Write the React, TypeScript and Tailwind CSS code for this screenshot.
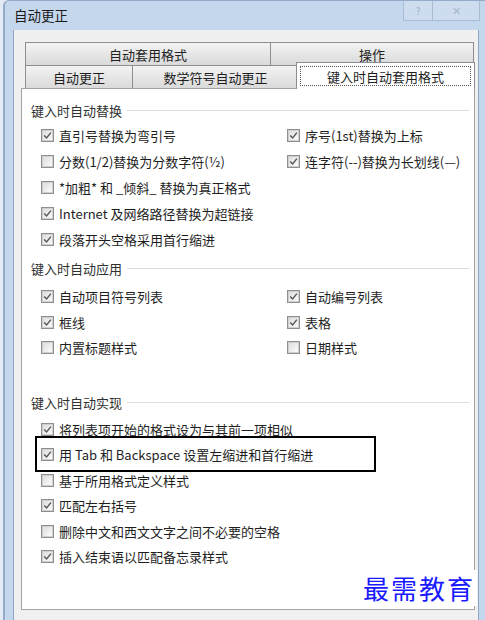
import React from "react";

const Check = ({ checked }: { checked: boolean }) => (
  <span className="w-[13px] h-[13px] border border-[#8e8f8f] bg-[#f4f4f4] flex items-center justify-center shrink-0">
    <span className="w-[11px] h-[11px] border border-[#cfcfcf] bg-linear-to-br from-[#dedede] to-[#fbfbfb] flex items-center justify-center">
      {checked && (
        <svg width="9" height="9" viewBox="0 0 9 9">
          <path d="M1.2 4.4 L3.6 6.9 L7.9 1.6" fill="none" stroke="#5a5a5a" strokeWidth="1.5" />
        </svg>
      )}
    </span>
  </span>
);

const Item = ({ checked, label }: { checked: boolean; label: string }) => (
  <div className="flex items-center gap-[5px] h-full whitespace-nowrap">
    <Check checked={checked} />
    <span>{label}</span>
  </div>
);

const Header = ({ label }: { label: string }) => (
  <div className="flex items-center h-[20px] pl-[9px] pr-[5px] gap-[5px] text-[#303030]">
    <span className="whitespace-nowrap">{label}</span>
    <span className="flex-1 h-px bg-[#d5dfe5]" />
  </div>
);

const TabBtn = ({ label, w }: { label: string; w: string }) => (
  <div
    className={`${w} h-[23px] border border-b-0 border-[#8c8e94] -ml-px first:ml-0 bg-linear-to-b from-[#f3f3f3] to-[#dadada] flex items-center justify-center text-[#222]`}
  >
    {label}
  </div>
);

export default function App() {
  return (
    <div className="w-[485px] h-[620px] bg-[#e3ebf5] pl-[3px] relative overflow-hidden text-[13px] leading-none text-[#1e1e1e] font-['Noto_Sans_CJK_SC','Microsoft_YaHei',sans-serif]">
      <div className="h-full border-l-2 border-t border-[#93abc8] rounded-tl-[6px] bg-[#c5d7ec] flex flex-col relative">
        <div className="h-[29px] flex items-center pl-[9px] pt-[1px] text-[13.5px] text-[#1a1a1a]">自动更正</div>
        <div className="absolute right-[5px] top-0 flex h-[20px]">
          <div className="w-[30px] h-full border border-t-0 border-[#a8bcd4] bg-[#cddcee] flex items-center justify-center text-[10px] text-[#9aaec8]">?</div>
          <div className="w-[47px] h-full border border-t-0 border-l-0 border-[#a8bcd4] bg-[#cddcee] flex items-center justify-center text-[11px] text-[#a7b8cf]">✕</div>
        </div>
        <div className="flex-1 ml-[8px] mr-[6px] border-l border-r border-[#8ea6c2] bg-[#f0f0f0] flex flex-col">
          <div className="pt-[12px] pl-[11px] flex flex-col">
            <div className="flex">
              <TabBtn label="自动套用格式" w="w-[246px]" />
              <TabBtn label="操作" w="w-[204px]" />
            </div>
            <div className="flex items-end h-[23px] relative z-10">
              <div className="w-[108px] h-[23px] border border-b-0 border-[#8c8e94] bg-linear-to-b from-[#f3f3f3] to-[#dadada] flex items-center justify-center">自动更正</div>
              <div className="w-[166px] h-[23px] border border-b-0 border-l-0 border-[#8c8e94] bg-linear-to-b from-[#f3f3f3] to-[#dadada] flex items-center justify-center">数学符号自动更正</div>
              <div className="w-[179px] h-[27px] -ml-[3px] -mb-px border border-b-0 border-[#8c8e94] bg-white p-[3px]">
                <div className="h-full border border-dotted border-[#555] flex items-center justify-center">键入时自动套用格式</div>
              </div>
            </div>
          </div>
          <div className="ml-[7px] w-[454px] h-[522px] border border-[#a3a3a3] bg-white pt-[11px]">
            <Header label="键入时自动替换" />
            <div className="grid grid-cols-[246px_1fr] auto-rows-[26px] pl-[19px] mt-[2px]">
              <Item checked label="直引号替换为弯引号" />
              <Item checked label="序号(1st)替换为上标" />
              <Item checked={false} label="分数(1/2)替换为分数字符(½)" />
              <Item checked label="连字符(--)替换为长划线(—)" />
              <Item checked={false} label="*加粗* 和 _倾斜_ 替换为真正格式" />
              <div />
              <Item checked label="Internet 及网络路径替换为超链接" />
              <div />
              <Item checked label="段落开头空格采用首行缩进" />
              <div />
            </div>
            <div className="mt-[6px]">
              <Header label="键入时自动应用" />
            </div>
            <div className="grid grid-cols-[246px_1fr] auto-rows-[25.5px] pl-[19px] mt-[6px]">
              <Item checked label="自动项目符号列表" />
              <Item checked label="自动编号列表" />
              <Item checked label="框线" />
              <Item checked label="表格" />
              <Item checked={false} label="内置标题样式" />
              <Item checked={false} label="日期样式" />
            </div>
            <div className="mt-[32px]">
              <Header label="键入时自动实现" />
            </div>
            <div className="flex flex-col pl-[19px] mt-[4px]">
              <div className="h-[25.5px]"><Item checked label="将列表项开始的格式设为与其前一项相似" /></div>
              <div className="h-[25.5px] relative">
                <Item checked label="用 Tab 和 Backspace 设置左缩进和首行缩进" />
                <div className="absolute left-[-6px] top-[-6px] w-[341px] h-[36px] border-2 border-black" />
              </div>
              <div className="h-[25.5px]"><Item checked={false} label="基于所用格式定义样式" /></div>
              <div className="h-[25.5px]"><Item checked label="匹配左右括号" /></div>
              <div className="h-[25.5px]"><Item checked={false} label="删除中文和西文文字之间不必要的空格" /></div>
              <div className="h-[25.5px]"><Item checked label="插入结束语以匹配备忘录样式" /></div>
            </div>
          </div>
        </div>
      </div>
      <div className="absolute left-[361px] top-[570px] bg-white px-[2px] h-[36px] flex items-center whitespace-nowrap text-[26px] tracking-[2px] text-[#1a1aff] font-['Noto_Sans_CJK_SC',sans-serif]">最需教育</div>
    </div>
  );
}
